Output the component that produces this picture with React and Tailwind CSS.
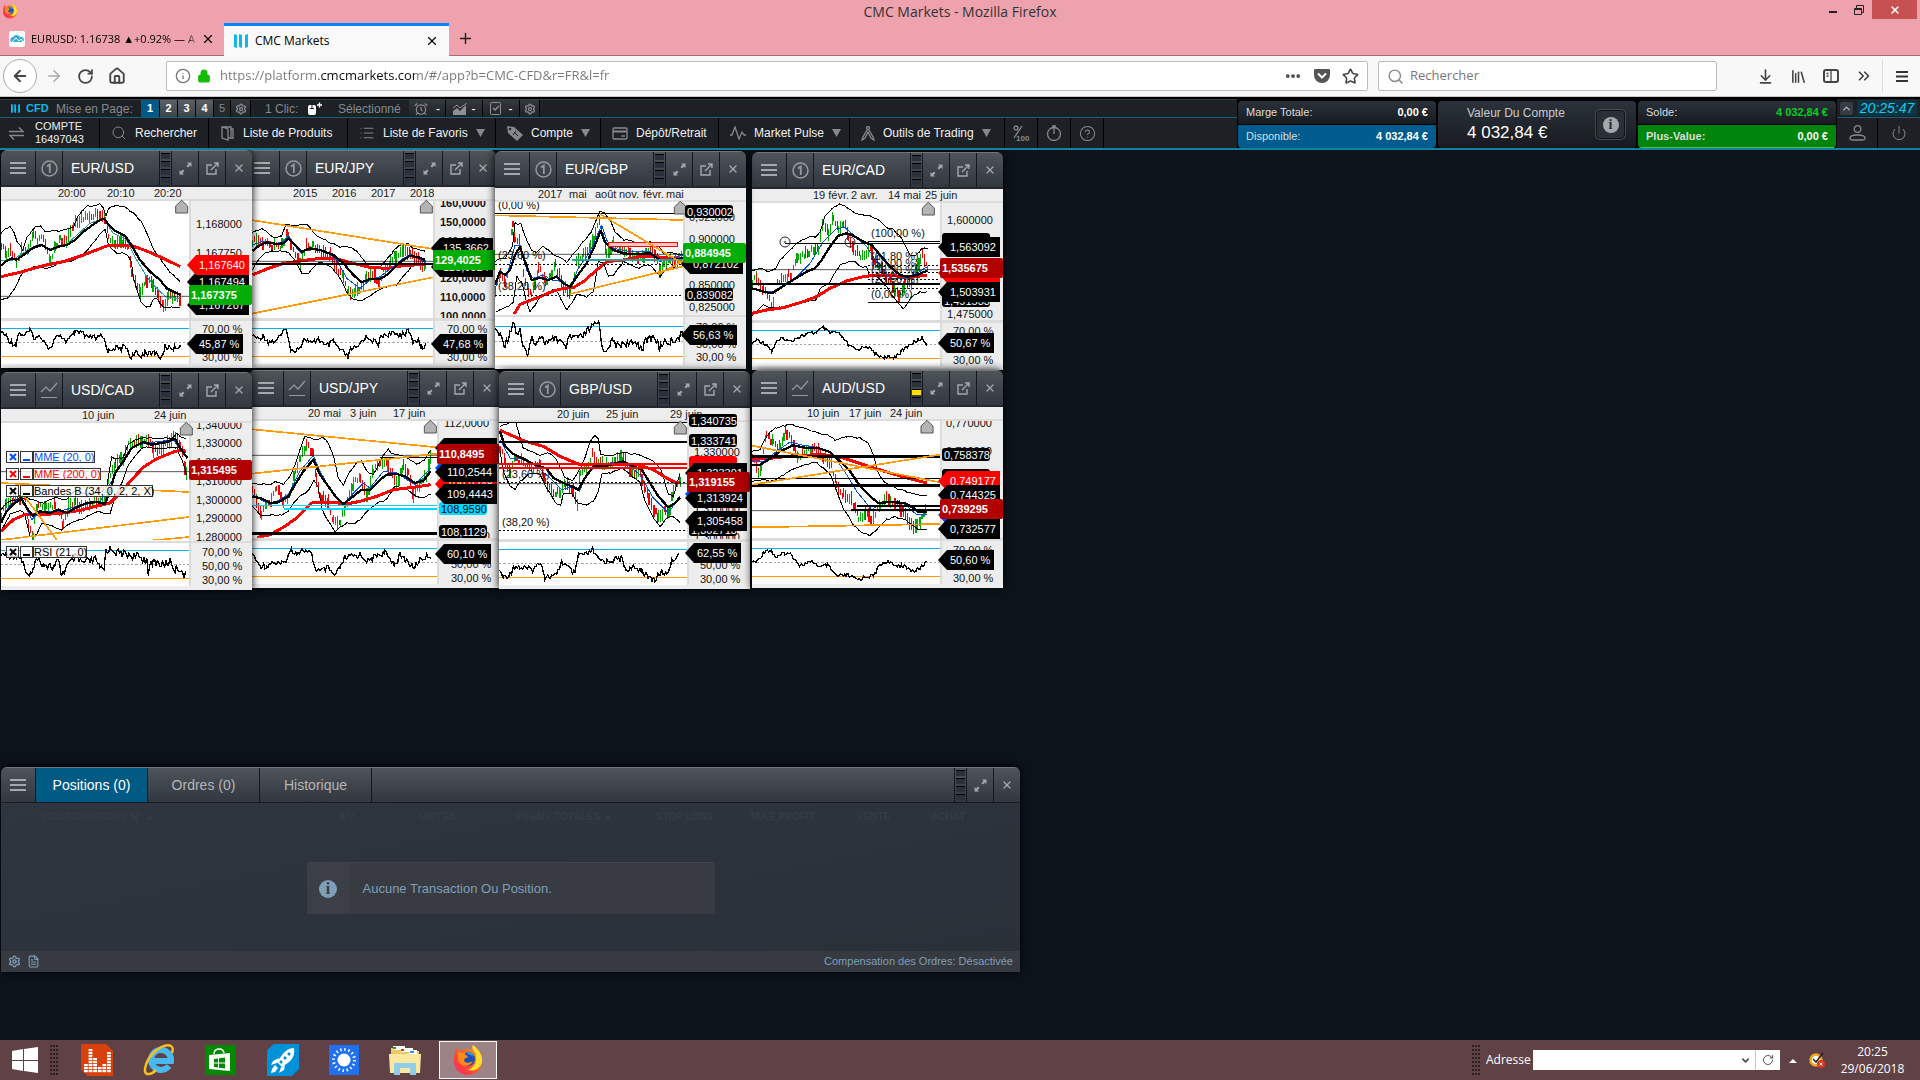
import {
  AlarmClock,
  ArrowDownToLine,
  ArrowLeft,
  ArrowRight,
  ChevronDown,
  ChevronsRight,
  ChevronUp,
  CircleHelp,
  Ellipsis,
  FileText,
  House,
  Info,
  Library,
  List,
  Lock,
  Plus,
  Power,
  RotateCw,
  Search,
  Settings,
  Star,
  X,
} from "lucide-react";

const SANS = "font-['Liberation_Sans',Arial,sans-serif]";
const UI = "font-['Open_Sans','Noto_Sans',sans-serif]";

// Chart coordinates are stored at three units per pixel.
const CHARTS = [
  {
    name: "EUR/USD", mode: "one", place: "left-[1px] top-0 z-20", x0: 3, y0: 126,
    sep: 520, rsi: [550, 592, 634], marker: 545,
    time: [[175, "20:00"], [322, "20:10"], [462, "20:20"]],
    upper: "3,265 15,252 30,246 42,262 52,290 68,313 80,278 105,246 122,242 134,260 170,258 204,252 220,245 232,215 250,193 262,183 290,181 300,178 310,190 318,210 326,190 345,181 375,188 400,205 425,232 445,275 460,315 480,340 500,370 520,392 541,412",
    lower: "3,465 25,458 45,430 60,395 75,378 100,366 120,364 140,372 160,365 190,350 215,350 235,335 255,322 275,300 290,280 305,262 316,255 325,300 340,315 350,325 370,325 385,335 395,355 400,400 415,450 425,475 440,487 450,485 460,465 470,460 480,475 490,488 541,488",
    black: "3,362 15,350 35,340 50,344 70,330 100,308 125,300 150,315 175,305 200,300 225,285 250,260 275,242 300,225 312,221 325,238 345,257 375,272 400,310 420,345 450,380 480,405 500,430 520,440 541,450",
    red: "3,395 60,382 130,362 190,350 250,330 320,303 390,300 440,318 490,340 541,365",
    fast: "3,345 40,345 60,330 100,305 120,297 150,312 200,298 240,262 270,235 310,220 340,265 380,285 410,345 440,395 470,430 500,458 541,460",
    fastColor: "#2a9d9d",
    candles: "3,300 20,330 30,310 50,360 65,315 85,315 100,260 112,290 130,280 150,345 165,300 180,285 200,290 220,240 245,220 262,215 280,210 300,205 315,220 325,280 345,292 370,290 385,310 395,380 420,440 435,405 460,415 475,450 490,490 505,450 525,460 541,462",
    osc: "3,560 20,575 30,590 48,598 55,565 75,570 90,558 105,580 125,575 150,612 165,580 185,575 200,590 225,565 250,562 255,580 275,575 290,582 302,575 312,582 325,618 340,608 360,612 378,603 390,635 402,630 410,625 420,635 435,620 450,628 465,622 485,640 495,605 520,610 541,601",
    lines: [["3,454 567,454", "#000", 2]],
    labels: [
      ["t", 587, 238, "1,168000"], ["t", 587, 325, "1,167750"],
      ["a", 412, "1,167494", "#000"], ["a", 361, "1,167640", "#ff0000"],
      ["a", 481, "1,167287", "#000"], ["p", 450, "1,167375", "#00ad00"],
      ["t", 607, 553, "70,00 %"], ["t", 607, 637, "30,00 %"], ["s", 598, "45,87 %", "#000"],
    ],
  },
  {
    name: "EUR/JPY", mode: "one", place: "left-[245px] top-0 z-10", x0: 735, y0: 126,
    sep: 520, rsi: [550, 592, 634], marker: 1279,
    time: [[879, "2015"], [997, "2016"], [1113, "2017"], [1230, "2018"]],
    upper: "757,262 785,252 805,262 820,278 845,272 858,238 880,242 920,238 940,262 960,278 985,290 1000,295 1020,305 1050,305 1070,320 1100,358 1130,355 1145,362 1160,345 1180,320 1200,300 1225,297 1240,312 1275,318",
    lower: "757,375 775,345 800,320 845,317 865,322 885,345 905,385 925,388 940,365 960,352 990,362 1015,390 1040,440 1060,465 1080,468 1100,458 1130,440 1160,425 1190,422 1205,400 1225,378 1240,360 1275,355",
    black: "757,318 780,300 800,292 830,297 850,295 865,280 880,295 905,320 930,310 960,315 1000,330 1030,355 1060,390 1085,412 1110,402 1140,402 1160,390 1190,360 1210,345 1230,332 1260,338 1275,345",
    red: "757,390 800,372 850,355 900,348 960,340 1010,342 1060,355 1110,367 1160,370 1210,362 1275,358",
    fast: "757,300 790,288 830,295 850,290 866,272 890,310 905,325 930,308 980,320 1010,345 1040,400 1080,430 1110,405 1140,395 1180,365 1210,340 1232,328 1275,352",
    candles: "757,290 775,280 790,295 810,300 840,305 852,290 860,255 875,310 900,350 918,300 940,305 970,325 990,330 1010,370 1030,390 1045,445 1065,435 1090,425 1100,385 1130,400 1138,420 1150,380 1170,350 1190,330 1210,315 1230,320 1255,345 1275,365",
    osc: "757,570 775,582 790,572 805,590 825,588 845,570 860,550 872,620 900,605 915,580 935,598 955,580 975,605 1000,590 1020,615 1044,635 1055,610 1070,612 1090,580 1110,578 1135,600 1145,572 1160,568 1200,568 1228,560 1238,592 1255,585 1265,610 1277,600",
    lines: [
      ["735,222 1299,312", "#ff9900", 5], ["735,510 1299,397", "#ff9900", 5],
      ["735,349 1299,349", "#000", 2], ["735,356 1299,356", "#000", 6],
    ],
    labels: [
      ["b", 1319, 174, "160,0000"], ["b", 1319, 230, "150,0000"], ["b", 1319, 287, "140,0000"],
      ["b", 1319, 398, "120,0000"], ["b", 1319, 455, "110,0000"], ["b", 1319, 512, "100,0000"],
      ["a", 309, "135,3662", "#000"], ["a", 366, "125,9824", "#000"], ["p", 346, "129,4025", "#00ad00"],
      ["t", 1340, 553, "70,00 %"], ["t", 1340, 637, "30,00 %"], ["s", 597, "47,68 %", "#000"],
    ],
  },
  {
    name: "EUR/GBP", mode: "one", place: "left-[495px] top-[1px] z-20", x0: 15, y0: 129,
    sep: 510, rsi: [545, 590, 634], marker: 571,
    time: [[145, "2017"], [238, "mai"], [314, "août"], [388, "nov."], [460, "févr."], [529, "mai"]],
    upper: "15,350 30,340 45,342 58,320 68,300 75,235 92,235 110,285 125,315 140,322 160,305 185,325 210,338 230,350 255,320 280,290 305,260 330,198 345,205 360,225 375,262 400,285 430,290 455,305 480,292 500,295 520,325 545,325 578,330",
    lower: "20,500 40,490 55,485 70,470 80,395 95,410 110,470 120,500 135,480 150,455 190,435 205,445 230,495 245,475 260,445 290,455 310,440 325,350 340,355 355,395 370,390 400,350 440,370 480,360 510,395 530,372 578,365",
    black: "15,420 30,380 45,390 60,375 75,330 90,305 105,350 125,405 150,398 175,405 200,395 220,415 240,425 260,395 290,355 315,300 332,258 345,290 370,315 400,325 430,328 480,325 510,345 540,345 578,340",
    red: "72,508 90,478 120,466 150,455 190,438 220,430 250,428 280,410 320,375 350,350 400,345 450,335 500,335 540,340 575,342",
    fast: "15,435 30,375 50,395 75,300 92,300 110,375 130,400 160,390 185,405 215,405 240,428 265,370 300,320 335,240 350,285 370,310 420,320 480,320 510,350 578,330",
    candles: "15,440 30,380 45,410 60,370 68,230 75,290 88,285 100,380 115,440 125,455 135,420 145,360 165,405 180,400 195,360 220,430 240,440 260,345 280,330 300,300 315,270 328,225 340,270 350,330 370,300 390,310 420,325 450,340 480,310 495,330 510,375 530,345 555,350 575,335",
    osc: "15,550 35,580 45,600 60,560 70,530 80,565 90,560 100,615 115,620 125,580 140,592 150,570 165,592 180,595 195,575 215,595 225,612 240,580 260,575 275,580 290,560 310,545 326,532 342,628 355,600 370,590 385,605 400,590 420,600 440,590 455,610 475,580 495,575 508,612 520,590 540,590 560,580 578,570",
    rough: 26,
    lines: [
      ["15,205 579,205", "#000", 3], ["15,328 579,328", "#000", 2],
      ["15,358 579,358", "#000", 3, "6 6"], ["15,451 579,451", "#000", 3, "6 6"],
      ["354,292 563,292 563,304 354,304 354,292", "#ff0000", 3], ["357,298 561,298", "#ffc4c4", 8],
      ["247,345 579,345", "#2a9d9d", 6], ["15,211 579,225", "#ff9900", 5],
      ["330,207 579,356", "#ff9900", 5], ["240,447 579,364", "#ff9900", 5], ["505,388 579,348", "#ff9900", 5],
    ],
    labels: [
      ["t", 24, 180, "(0,00 %)"], ["t", 24, 331, "(23,60 %)"], ["t", 24, 424, "(38,20 %)"],
      ["t", 598, 215, "0,925000"], ["r", 202, "0,930002", "#000"], ["t", 598, 283, "0,900000"],
      ["a", 357, "0,872102", "#000"], ["p", 324, "0,884945", "#00ad00"],
      ["t", 598, 419, "0,850000"], ["r", 449, "0,839082", "#000"], ["t", 598, 487, "0,825000"],
      ["t", 619, 545, "70,00 %"], ["t", 619, 598, "50,00 %"], ["t", 619, 637, "30,00 %"],
      ["s", 570, "56,63 %", "#000"],
    ],
  },
  {
    name: "EUR/CAD", mode: "one", place: "left-[752px] top-[2px] z-10", x0: 786, y0: 132,
    sep: 526, rsi: [557, 598, 640], marker: 1315,
    time: [[968, "19 févr."], [1082, "2 avr."], [1194, "14 mai"], [1306, "25 juin"]],
    upper: "786,378 810,370 830,378 855,372 870,345 890,325 920,295 950,280 975,275 990,262 1005,215 1025,190 1050,176 1075,190 1100,208 1140,212 1165,225 1185,245 1210,255 1235,280 1250,310 1262,335 1280,330 1295,312 1312,310",
    lower: "786,512 820,480 845,488 880,485 915,480 950,472 980,462 990,432 1020,410 1030,390 1050,360 1075,350 1095,352 1110,365 1130,365 1140,395 1160,395 1185,420 1205,450 1225,475 1240,492 1255,475 1265,455 1290,442 1312,442",
    black: "786,430 805,435 820,440 845,445 870,430 900,410 925,395 950,380 975,370 995,345 1020,305 1045,272 1070,265 1090,272 1120,290 1145,300 1170,330 1200,365 1230,390 1250,395 1280,390 1312,377",
    red: "786,505 830,495 880,488 940,470 980,455 1020,430 1070,408 1120,395 1160,390 1220,393 1260,397 1312,390",
    fast: "786,430 815,438 850,440 880,420 920,395 960,355 1000,290 1040,250 1065,248 1100,278 1130,305 1160,350 1200,400 1240,400 1280,385 1312,365",
    candles: "786,410 800,395 820,435 850,480 862,410 880,400 895,390 905,400 920,340 945,325 965,315 985,310 1000,225 1015,270 1030,215 1045,255 1060,230 1075,270 1090,310 1110,335 1140,310 1155,350 1175,370 1190,400 1215,430 1230,455 1245,410 1265,410 1280,370 1297,330 1312,370",
    osc: "786,595 800,585 815,590 832,600 845,618 860,590 880,580 900,590 920,578 950,568 975,562 1000,548 1020,565 1035,560 1055,575 1075,600 1100,615 1130,602 1160,630 1185,638 1210,638 1240,615 1260,598 1280,588 1297,578 1312,600",
    rough: 11,
    lines: [
      ["786,374 1350,374", "#000", 2], ["786,416 1350,416", "#000", 6],
      ["885,296 1350,296", "#000", 3], ["1134,290 1350,290", "#000", 3], ["1134,472 1350,472", "#000", 3],
      ["1134,361 1350,361", "#000", 3, "6 6"], ["1134,382 1350,382", "#000", 3, "6 6"],
      ["1134,403 1350,403", "#000", 3, "6 6"], ["1134,430 1350,430", "#000", 3, "6 6"],
    ],
    handles: [[885, 291], [1080, 291]],
    labels: [
      ["t", 1144, 263, "(100,00 %)"], ["t", 1144, 333, "(61,80 %)"], ["t", 1144, 355, "(50,00 %)"],
      ["t", 1144, 376, "(38,20 %)"], ["t", 1144, 403, "(23,60 %)"], ["t", 1144, 447, "(0,00 %)"],
      ["t", 1370, 224, "1,600000"], ["r", 284, "", "#000"], ["a", 307, "1,563092", "#000"],
      ["a", 383, "", "#ff0000"], ["r", 469, "1,491533", "#000"], ["a", 442, "1,503931", "#000"],
      ["p", 370, "1,535675", "#b00000"], ["t", 1370, 506, "1,475000"],
      ["t", 1390, 559, "70,00 %"], ["t", 1390, 644, "30,00 %"], ["s", 595, "50,67 %", "#000"],
    ],
  },
  {
    name: "USD/CAD", mode: "line", place: "left-[1px] top-[222px] z-20", x0: 3, y0: 123,
    sep: 518, rsi: [548, 590, 632], marker: 559,
    time: [[245, "10 juin"], [462, "24 juin"]],
    upper: "3,425 20,405 45,395 60,390 75,388 100,395 130,405 165,390 200,395 225,368 260,378 300,375 320,360 335,268 350,272 370,268 385,230 410,215 440,210 480,212 515,212 530,198 540,205 560,215",
    lower: "3,490 30,440 60,425 75,440 90,505 110,500 125,465 140,468 185,488 200,470 240,455 290,430 330,438 345,390 365,345 385,290 410,260 430,238 460,242 510,240 530,240 545,275 560,320",
    black: "3,465 20,430 40,408 65,392 80,420 98,443 120,430 150,435 175,425 200,435 230,418 260,405 290,402 315,408 330,370 345,315 370,280 395,240 430,222 455,230 500,222 525,212 540,240 562,270",
    red: "3,490 40,455 75,440 130,440 190,435 240,427 300,412 330,405 360,375 400,330 430,298 470,272 520,252 545,245 558,250",
    fast: "3,460 30,410 65,390 95,455 120,430 180,430 240,412 300,402 335,340 370,275 400,235 440,225 520,215 560,270",
    candles: "3,440 20,400 40,395 60,395 75,395 85,470 98,500 110,420 140,415 165,410 190,470 205,415 225,400 245,425 270,405 300,395 320,390 330,320 345,280 370,275 385,230 410,220 445,215 460,245 490,240 520,205 540,230 555,300 560,320",
    osc: "3,560 20,560 50,560 70,580 80,625 95,625 105,575 130,585 160,600 175,580 185,620 205,590 225,570 250,585 290,575 300,605 312,605 318,545 340,545 355,555 390,560 420,570 440,575 445,610 460,580 490,590 510,580 525,605 540,600 558,630",
    rough: 26,
    lines: [
      ["3,311 567,311", "#000", 2], ["3,345 567,372", "#ff9900", 5], ["3,516 567,447", "#ff9900", 5],
      ["450,518 567,507", "#ff9900", 5], ["70,380 170,515", "#ff9900", 5],
    ],
    studies: [
      [267, "MME (20, 0)", "#0050ff", 182], [317, "MME (200, 0)", "#ff0000", 200],
      [368, "Bandes B (34, 0, 2, 2, X)", "#000", 358], [551, "RSI (21, 0)", "#000", 160],
    ],
    labels: [
      ["t", 587, 170, "1,340000"], ["t", 587, 226, "1,330000"], ["t", 587, 282, "1,320000"],
      ["t", 587, 338, "1,310000"], ["t", 587, 395, "1,300000"], ["t", 587, 451, "1,290000"],
      ["t", 587, 508, "1,280000"], ["p", 306, "1,315495", "#b00000"],
      ["t", 607, 551, "70,00 %"], ["t", 607, 593, "50,00 %"], ["t", 607, 635, "30,00 %"],
    ],
  },
  {
    name: "USD/JPY", mode: "line", place: "left-[249px] top-[220px] z-10", x0: 747, y0: 117,
    sep: 511, rsi: [542, 584, 626], marker: 1291,
    time: [[924, "20 mai"], [1050, "3 juin"], [1178, "17 juin"]],
    upper: "757,345 780,350 810,348 830,340 850,348 870,325 885,290 900,245 915,205 940,215 970,210 985,225 1000,260 1015,330 1030,350 1050,310 1070,285 1085,280 1100,310 1120,320 1145,270 1165,245 1180,260 1200,262 1225,272 1250,290 1275,275 1292,245",
    lower: "757,415 785,445 810,440 845,440 865,430 880,405 900,385 925,370 942,335 955,360 965,420 980,450 1005,490 1020,478 1040,465 1065,468 1085,450 1100,430 1135,405 1160,395 1185,355 1215,362 1240,380 1262,392 1292,380",
    black: "757,385 785,392 810,405 835,403 865,385 885,350 910,310 940,275 960,320 985,355 1010,390 1030,408 1060,385 1085,365 1110,365 1135,340 1160,320 1190,318 1215,325 1245,345 1270,338 1292,310",
    red: "772,508 810,500 850,478 890,450 935,405 990,402 1040,408 1080,400 1130,385 1180,365 1240,358 1292,350",
    fast: "757,380 800,405 830,400 865,380 900,310 940,262 960,310 1000,380 1030,410 1060,375 1090,345 1110,360 1150,310 1190,315 1245,350 1292,300",
    candles: "757,360 770,400 785,435 800,415 815,400 830,355 850,400 870,385 885,310 900,265 920,230 940,260 950,340 965,390 985,405 1000,460 1020,460 1035,410 1060,350 1080,325 1100,385 1120,310 1140,280 1165,290 1190,345 1210,290 1225,320 1240,380 1262,345 1280,320 1290,270",
    osc: "757,555 775,590 800,595 820,580 830,588 850,588 875,545 890,555 910,545 935,560 945,600 960,610 985,600 1003,625 1020,600 1035,570 1060,565 1080,560 1105,580 1130,562 1155,555 1185,590 1200,562 1220,578 1240,600 1260,575 1280,565 1292,562",
    lines: [
      ["747,262 1311,262", "#000", 2], ["1140,268 1311,268", "#000", 3],
      ["747,412 1311,412", "#00d8ff", 3], ["852,422 1311,422", "#00d8ff", 6], ["747,496 1311,496", "#000", 8],
      ["747,183 1311,238", "#ff9900", 5], ["747,318 1311,257", "#ff9900", 5],
    ],
    labels: [
      ["t", 1331, 164, "112,0000"], ["a", 240, "", "#000"], ["a", 299, "", "#0050ff"],
      ["a", 347, "109,9248", "#ff0000"], ["a", 312, "110,2544", "#000"],
      ["r", 422, "108,9590", "#00d8ff"], ["a", 379, "109,4443", "#000"],
      ["t", 1331, 504, "108,0000"], ["r", 493, "108,1129", "#000"], ["p", 259, "110,8495", "#b00000"],
      ["t", 1352, 587, "50,00 %"], ["t", 1352, 629, "30,00 %"], ["s", 558, "60,10 %", "#000"],
    ],
  },
  {
    name: "GBP/USD", mode: "one", place: "left-[499px] top-[221px] z-20", x0: 27, y0: 120,
    sep: 514, rsi: [545, 587, 628], marker: 571,
    time: [[202, "20 juin"], [348, "25 juin"], [540, "29 juin"]],
    upper: "30,175 50,168 78,162 88,200 100,240 125,250 150,262 175,255 200,275 225,330 250,335 265,310 285,270 300,220 315,203 325,215 332,262 360,262 400,255 450,262 490,280 515,310 535,380 550,385 570,318",
    lower: "30,250 40,310 60,355 75,362 90,340 120,315 150,318 170,360 200,410 212,412 220,375 245,378 265,405 290,410 310,400 325,370 335,320 360,315 395,300 420,320 450,345 465,400 490,450 510,478 530,450 550,445 570,465",
    black: "30,190 45,235 70,258 100,272 135,290 170,302 190,330 220,345 245,355 265,365 285,330 310,295 340,295 370,288 400,280 430,295 455,305 480,345 505,385 535,418 555,405 570,388",
    red: "30,187 60,200 100,218 160,235 210,265 265,288 320,292 370,290 440,290 490,305 530,330 555,342 570,344",
    fast: "30,215 60,270 90,270 140,295 180,330 215,365 250,355 268,370 290,320 320,290 400,280 450,320 490,390 535,435 570,385",
    candles: "30,240 45,280 60,310 75,270 100,285 130,300 150,290 165,340 185,370 210,375 225,345 250,370 262,405 270,310 290,300 308,260 325,280 355,295 375,272 400,270 420,310 450,315 465,360 485,410 505,445 525,430 540,425 550,370 570,335",
    osc: "27,605 40,628 60,620 70,595 100,600 130,605 152,580 165,628 200,622 215,580 235,600 255,620 265,560 290,560 308,545 325,575 350,580 395,570 408,605 430,600 455,605 470,625 495,635 515,610 530,620 545,580 568,555",
    lines: [
      ["27,163 591,163", "#000", 3], ["27,222 591,222", "#000", 6], ["27,289 591,289", "#ff0000", 6],
      ["27,300 591,300", "#ff0000", 6], ["27,344 591,344", "#000", 3, "6 6"], ["27,347 591,347", "#000", 2],
      ["27,488 591,488", "#000", 3, "6 6"],
    ],
    labels: [
      ["t", 36, 317, "(23,60 %)"], ["t", 36, 461, "(38,20 %)"],
      ["r", 160, "1,340735", "#000"], ["r", 218, "1,333741", "#000"], ["t", 611, 251, "1,330000"],
      ["r", 284, "", "#ff0000"], ["a", 315, "1,323301", "#000"], ["a", 377, "", "#0050ff"],
      ["t", 611, 422, "1,310000"], ["a", 389, "1,313924", "#000"], ["t", 611, 506, "1,300000"],
      ["r", 486, "1,302713", "#000"], ["a", 460, "1,305458", "#000"], ["p", 342, "1,319155", "#b00000"],
      ["t", 631, 590, "50,00 %"], ["t", 631, 632, "30,00 %"], ["s", 555, "62,55 %", "#000"],
    ],
  },
  {
    name: "AUD/USD", mode: "line", place: "left-[752px] top-[220px] z-20", x0: 786, y0: 117, led: 2,
    sep: 511, rsi: [542, 584, 626], marker: 1311,
    time: [[952, "10 juin"], [1077, "17 juin"], [1200, "24 juin"]],
    upper: "786,250 810,245 825,215 840,190 860,178 900,168 940,180 980,195 1010,200 1035,215 1070,205 1110,210 1135,228 1150,260 1165,315 1185,345 1215,360 1250,372 1280,380 1310,385",
    lower: "786,340 820,335 850,338 880,320 910,302 950,290 980,283 1000,300 1025,325 1040,370 1060,420 1090,470 1115,495 1140,502 1165,480 1190,455 1215,448 1245,455 1270,475 1285,485 1310,485",
    black: "786,290 810,290 835,275 870,250 910,232 950,240 985,240 1020,252 1050,280 1080,310 1110,355 1140,385 1165,405 1200,402 1245,405 1270,420 1285,432 1310,430",
    red: "786,275 850,270 920,262 1000,260 1060,270 1120,290 1200,315 1260,332 1310,345",
    fast: "786,280 820,280 860,250 900,222 940,232 990,240 1030,260 1070,320 1100,370 1145,425 1180,402 1240,405 1280,440 1310,440",
    candles: "786,265 805,315 815,290 830,200 850,225 870,235 885,190 905,220 925,265 950,250 980,240 1000,270 1025,285 1040,350 1060,380 1085,390 1105,450 1125,435 1150,455 1170,410 1190,390 1215,405 1240,425 1265,475 1290,465 1305,430",
    osc: "786,580 800,582 828,545 845,550 860,570 885,555 905,560 930,592 970,582 990,598 1012,592 1040,625 1070,622 1105,635 1130,625 1150,625 1170,590 1190,580 1210,592 1235,592 1270,610 1290,600 1310,580",
    rough: 12,
    lines: [
      ["786,265 1350,265", "#000", 8], ["786,332 1350,332", "#000", 3], ["786,352 1350,352", "#000", 8],
      ["1101,414 1350,414", "#000", 5], ["1084,425 1350,425", "#000", 5], ["786,428 1350,428", "#000", 2],
      ["786,233 1350,343", "#ff9900", 5], ["786,350 1350,260", "#ff9900", 5], ["786,478 1350,468", "#ff9900", 5],
    ],
    labels: [
      ["t", 1368, 164, "0,770000"], ["t", 1368, 248, "0,760000"], ["r", 262, "0,758378", "#000"],
      ["r", 325, "", "#000"], ["a", 340, "0,749177", "#ff0000"], ["a", 382, "0,744325", "#000"],
      ["a", 440, "", "#0050ff"], ["a", 482, "0,732577", "#000"], ["p", 424, "0,739295", "#b00000"],
      ["t", 1390, 545, "70,00 %"], ["t", 1390, 629, "30,00 %"], ["s", 576, "50,60 %", "#000"],
    ],
  },
];

const parse = (s) => s.split(" ").map((p) => p.split(",").map(Number));

const noise = (n) => {
  const v = Math.sin(n * 12.9898) * 43758.5453;
  return v - Math.floor(v);
};

function sample(str, step) {
  const pts = parse(str);
  const out = [];
  for (let i = 0; i < pts.length - 1; i++) {
    const [xa, ya] = pts[i];
    const [xb, yb] = pts[i + 1];
    for (let x = xa; x < xb; x += step) {
      out.push([x, ya + ((yb - ya) * (x - xa)) / (xb - xa)]);
    }
  }
  out.push(pts[pts.length - 1]);
  return out;
}

function jitter(str, step, amount) {
  return sample(str, step)
    .map(([x, y], i) => `${x},${(y + (noise(i + 3) - 0.5) * amount).toFixed(1)}`)
    .join(" ");
}

function Candles({ path }) {
  const pts = sample(path, 6);
  return pts.map(([x, y], i) => {
    const next = pts[i + 1] ? pts[i + 1][1] : y;
    const up = next - y + (noise(i) - 0.5) * 14 < 0;
    const h = 7 + noise(i + 50) * 14;
    const off = (noise(i + 90) - 0.5) * 16;
    return (
      <line
        key={i}
        x1={x}
        x2={x}
        y1={y + off - h}
        y2={y + off + h}
        stroke={up ? "#00a800" : "#f00000"}
        strokeWidth={noise(i + 20) > 0.7 ? 5 : 3}
      />
    );
  });
}

function AxisLabel({ item, chart, clip }) {
  const { x0, y0, sep } = chart;
  const px = (v) => Math.round((v - x0) / 3);
  const py = (v) => Math.round((v - y0) / 3);
  const kind = item[0];

  if (kind === "t" || kind === "b") {
    return (
      <text
        x={px(item[1])}
        y={py(item[2]) + 4}
        fontSize="11"
        fontWeight={kind === "b" ? 700 : 400}
        fill="#111"
        clipPath={item[2] < sep ? `url(#${clip})` : undefined}
      >
        {item[3]}
      </text>
    );
  }

  const [, cy, text, color] = item;
  const y = py(cy);
  if (kind === "r") {
    return (
      <g>
        <rect x="190" y={y - 7} width="48" height="13" rx="3" fill={color} />
        <text x="192" y={y + 4} fontSize="11" fill={color === "#00d8ff" ? "#000" : "#fff"}>{text}</text>
      </g>
    );
  }
  if (kind === "p") {
    return (
      <g>
        <path d={`M188 ${y - 8}a2 2 0 0 1 2 -2h59a2 2 0 0 1 2 2v16a2 2 0 0 1 -2 2h-59a2 2 0 0 1 -2 -2z`} fill={color} />
        <text x="190" y={y + 4} fontSize="11" fontWeight="700" fill="#fff">{text}</text>
      </g>
    );
  }
  const right = kind === "s" ? 242 : 248;
  return (
    <g>
      <path d={`M186 ${y}L195 ${y - 10}H${right}V${y + 10}H195Z`} fill={color} />
      <text x="198" y={y + 4} fontSize="11" fill="#fff">{text}</text>
    </g>
  );
}

function Chart({ chart }) {
  const { x0, y0, sep, rsi, marker } = chart;
  const edge = x0 + 564;
  const end = x0 + 753;
  const id = `plot-${chart.name.replace("/", "")}`;
  return (
    <svg width="251" height="181" className={`block ${SANS}`} role="img" aria-label={`Graphique ${chart.name}`}>
      <defs>
        <clipPath id={`${id}-axis`}>
          <rect x="0" y="14" width="251" height={Math.round((sep - y0) / 3) - 14} />
        </clipPath>
      </defs>
      <svg width="251" height="181" viewBox={`${x0} ${y0} 753 543`} shapeRendering="crispEdges">
        <defs>
          <clipPath id={id}>
            <rect x={x0} y={y0 + 40} width="564" height={sep - y0 - 42} />
          </clipPath>
        </defs>
        <rect x={x0} y={y0} width="753" height="543" fill="#ededed" />
        <rect x={x0} y={y0 + 36} width="753" height="6" fill="#dcdcdc" />
        <rect x={x0} y={y0 + 42} width="564" height="489" fill="#fff" />
        <rect x={edge} y={y0 + 42} width="5" height="489" fill="#dcdcdc" />
        <rect x={x0} y={sep} width={end - x0} height="7" fill="#dcdcdc" />
        <g clipPath={`url(#${id})`} fill="none" strokeLinejoin="round">
          <Candles path={chart.candles} />
          <polyline points={jitter(chart.upper, 8, 5)} stroke="#000" strokeWidth="3" />
          <polyline points={jitter(chart.lower, 8, 5)} stroke="#000" strokeWidth="3" />
          <polyline points={chart.red} stroke="#ff0000" strokeWidth="9" />
          <polyline points={chart.fast} stroke={chart.fastColor || "#0050e0"} strokeWidth="3" />
          <polyline points={chart.black} stroke="#000" strokeWidth="7" />
          {chart.lines.map(([points, color, width, dash]) => (
            <polyline key={points} points={points} stroke={color} strokeWidth={width} strokeDasharray={dash} />
          ))}
          {(chart.handles || []).map(([cx, cy]) => (
            <g key={cx} stroke="#222" strokeWidth="3" shapeRendering="auto">
              <circle cx={cx} cy={cy} r="15" />
              <path d={`M${cx - 4} ${cy}h8M${cx} ${cy - 4}v8`} strokeWidth="2" />
            </g>
          ))}
        </g>
        <path d={`M${x0} ${rsi[0]}H${edge}`} stroke="#00b4f0" strokeWidth="3" />
        <path d={`M${x0} ${rsi[1]}H${edge}`} stroke="#777" strokeWidth="2" strokeDasharray="7 6" />
        <path d={`M${x0} ${rsi[2]}H${edge}`} stroke="#ff9900" strokeWidth="3" />
        <polyline points={jitter(chart.osc, 4, chart.rough || 18)} fill="none" stroke="#000" strokeWidth="4" />
        <path
          d={`M${marker} ${y0 + 40}l18 17v21h-36v-21z`}
          fill="#b4b4b4"
          stroke="#555"
          strokeWidth="3"
          shapeRendering="auto"
        />
      </svg>
      {chart.time.map(([x, text]) => (
        <text key={x} x={Math.round((x - x0) / 3)} y="10" fontSize="11" fill="#222">{text}</text>
      ))}
      {chart.labels.map((item, i) => (
        <AxisLabel key={i} item={item} chart={chart} clip={`${id}-axis`} />
      ))}
      {(chart.studies || []).map(([cy, text, color, w]) => {
        const y = Math.round((cy - y0) / 3);
        return (
          <g key={text} fill="#fff" fillOpacity="0.8" stroke="#333">
            <rect x="5.5" y={y - 5.5} width="12" height="11" />
            <rect x="19.5" y={y - 5.5} width="12" height="11" />
            <rect x="32.5" y={y - 5.5} width={Math.round(w / 3)} height="11" />
            <path d={`M9 ${y - 3}l6 6m0 -6l-6 6M22 ${y + 3}h7`} stroke={color} strokeWidth="2" />
            <text x="33" y={y + 4} fontSize="11" fill={color} fillOpacity="1" stroke="none">{text}</text>
          </g>
        );
      })}
    </svg>
  );
}

function Leds({ lit }) {
  return (
    <div className="flex w-3 shrink-0 flex-col gap-[2px] border-l border-[#14171c] px-px pt-[2px]">
      {[0, 1, 2, 3].map((i) => (
        <span
          key={i}
          className={`h-[6px] border-t border-black ${lit === i ? "bg-[#ffe000]" : "bg-[#2b313c]"}`}
        />
      ))}
    </div>
  );
}

const HEAD_CELL = "flex w-[27px] shrink-0 items-center justify-center border-l border-[#14171c] text-[#a5a8ac]";
const HEAD = "flex border-t border-[#70757a] bg-linear-to-b from-[#4e5459] to-[#323740]";

function MenuIcon() {
  return (
    <svg width="16" height="12" viewBox="0 0 16 12" fill="#a5a8ac">
      <path d="M0 0h16v2H0zM0 5h16v2H0zM0 10h16v2H0z" />
    </svg>
  );
}

function ExpandIcon() {
  return (
    <svg width="13" height="13" viewBox="0 0 13 13" fill="currentColor">
      <path d="M8 .5h4.500V5L11 3.500 9 5.500 7.500 4l2-2zM5 12.500H.5V8L2 9.500l2-2L5.500 9l-2 2z" />
    </svg>
  );
}

function ChartWindow({ chart }) {
  return (
    <section className={`absolute w-[251px] overflow-hidden rounded-t-md shadow-[0_0_8px_#000] ${chart.place}`}>
      <header className={`${HEAD} h-[37px] border-b-2 border-b-[#23272e]`}>
        <button aria-label="Menu" className="flex w-[34px] shrink-0 items-center justify-center">
          <MenuIcon />
        </button>
        <button aria-label="Mode" className={HEAD_CELL}>
          {chart.mode === "one" ? (
            <svg width="17" height="17" viewBox="0 0 17 17" fill="none" stroke="#96999d">
              <circle cx="8.500" cy="8.500" r="7.500" strokeWidth="1.500" />
              <path d="M6 6.500L8.800 4.500V13" strokeWidth="1.800" />
            </svg>
          ) : (
            <svg width="18" height="17" viewBox="0 0 18 17" fill="none" stroke="#96999d">
              <path d="M1 10l5-5 4 4 7-8M1 15.500h16" strokeWidth="1.200" />
            </svg>
          )}
        </button>
        <h2 className="flex flex-1 items-center border-l border-[#14171c] pl-2 text-sm text-white">{chart.name}</h2>
        <Leds lit={chart.led} />
        <button aria-label="Agrandir" className={HEAD_CELL}><ExpandIcon /></button>
        <button aria-label="Détacher" className={HEAD_CELL}>
          <svg width="13" height="13" viewBox="0 0 13 13" fill="none" stroke="currentColor" strokeWidth="1.400">
            <path d="M6 3H1v9h9V7M5 8l7-7M8 1h4v4" />
          </svg>
        </button>
        <button aria-label="Fermer" className={HEAD_CELL}><X size={12} strokeWidth={2.4} /></button>
      </header>
      <Chart chart={chart} />
    </section>
  );
}

function FirefoxLogo({ size }) {
  return (
    <svg width={size} height={size} viewBox="0 0 32 32">
      <defs>
        <linearGradient id="ffx" x1="0" y1="1" x2="1" y2="0">
          <stop offset="0" stopColor="#ff1f6b" />
          <stop offset="0.5" stopColor="#ff5a20" />
          <stop offset="1" stopColor="#ffb020" />
        </linearGradient>
      </defs>
      <path d="M3 9c0-2 1-4 2-5l3 4c3-3 8-4 11-2l2-5c8 6 10 11 9 18-1 7-7 12-14 12C8 31 2 25 2 17c0-3 0-5 1-8z" fill="url(#ffx)" />
      <path d="M21 1c-2 5 3 6 3 12 1 6-3 11-8 13 8 2 14-3 14-10 0-6-4-11-9-15z" fill="#ffe030" />
      <circle cx="16" cy="15" r="7" fill="#1c50b8" />
      <path d="M14 9c3-2 7 0 8 3l-4-1z" fill="#28a0e8" />
      <path d="M6 8l4 1 4-1c-2 2-1 3 2 4-1 3-4 2-4 4 1 4 6 3 9 1-3 7-14 6-15-2z" fill="#ff8a1c" />
    </svg>
  );
}

function CmcBars({ className }) {
  return (
    <svg className={className} viewBox="0 0 14 14" fill="#10b8e8">
      <path d="M0 0l3 1v13l-3-1zM5 0l3 1v13l-3-1zM11 1l3-1v13l-3 1z" />
    </svg>
  );
}

function BrowserChrome() {
  return (
    <div className={UI}>
      <div className="relative flex h-14 items-end border-b border-[#a56c78] bg-[#eea2ad] text-xs">
        <div className="absolute left-[2px] top-[3px]"><FirefoxLogo size={16} /></div>
        <div className="absolute inset-x-0 top-0 text-center text-sm leading-6 text-[#333]">CMC Markets - Mozilla Firefox</div>
        <div className="absolute right-[3px] top-0 flex h-[19px] items-center text-[#111]">
          <button aria-label="Réduire" className="flex h-full w-[26px] items-center justify-center pt-1">
            <span className="h-[2px] w-2 bg-[#222]" />
          </button>
          <button aria-label="Restaurer" className="flex h-full w-[26px] items-center justify-center">
            <svg width="10" height="10" viewBox="0 0 10 10" fill="none" stroke="#222">
              <path d="M.5 3.500h7v6h-7zM2.500 3V.5h7v7H8M.5 4.500h7" />
            </svg>
          </button>
          <button aria-label="Fermer" className="flex h-full w-[45px] items-center justify-center bg-[#c75050] text-white">
            <X size={12} strokeWidth={3} />
          </button>
        </div>
        <div className="flex h-8 w-[224px] items-center px-[9px] text-black">
          <svg width="16" height="16" viewBox="0 0 16 16">
            <rect width="16" height="16" rx="2" fill="#fff" />
            <path d="M2 11a3 3 0 0 1 2-5 4 4 0 0 1 7 0 3 3 0 0 1 3 5z" fill="#35b0dc" />
            <path d="M3 11l4-4 3 3 2-2 2 3" stroke="#fff" fill="none" />
          </svg>
          <span className="ml-[6px] flex-1 whitespace-nowrap text-[11px] mask-r-from-90%">EURUSD: 1.16738 ▲+0.92% — A</span>
          <button aria-label="Fermer l'onglet"><X size={14} /></button>
        </div>
        <div className="-mb-px flex h-[33px] w-[225px] items-center border-t-[3px] border-[#0a84ff] bg-[#f9f9fa] px-[10px] pb-px text-black">
          <CmcBars className="h-4 w-[14px]" />
          <span className="ml-[7px] flex-1">CMC Markets</span>
          <button aria-label="Fermer l'onglet"><X size={14} /></button>
        </div>
        <button aria-label="Nouvel onglet" className="mb-2 ml-2"><Plus size={17} strokeWidth={2} color="#222" /></button>
      </div>

      <div className="flex h-[41px] items-center border-b border-[#c8c8c8] bg-[#f8f8f9] pl-[3px] text-[#444]">
        <button aria-label="Précédent" className="flex size-[34px] items-center justify-center rounded-full border border-[#aaa] bg-white">
          <ArrowLeft size={18} strokeWidth={2.5} />
        </button>
        <button aria-label="Suivant" className="ml-2 text-[#aaa]"><ArrowRight size={18} /></button>
        <button aria-label="Actualiser" className="ml-[14px]"><RotateCw size={17} strokeWidth={2.5} /></button>
        <button aria-label="Accueil" className="ml-[14px]"><House size={18} strokeWidth={2.5} /></button>
        <div className="ml-[40px] flex h-[30px] min-w-0 flex-1 items-center rounded-xs border border-[#bbb] bg-white px-2">
          <Info size={16} color="#777" />
          <Lock size={14} className="ml-[6px] fill-[#12bc00] text-[#12bc00]" />
          <input
            aria-label="Adresse"
            readOnly
            value="https://platform.cmcmarkets.com/#/app?b=CMC-CFD&r=FR&l=fr"
            className="ml-[9px] min-w-0 flex-1 bg-[linear-gradient(90deg,#777_99px,#0c0c0d_99px,#0c0c0d_195px,#777_195px)] bg-clip-text text-[13px] text-transparent outline-none"
          />
          <Ellipsis size={18} strokeWidth={3} />
          <svg width="16" height="16" viewBox="0 0 16 16" className="ml-3">
            <path d="M1 1h14a1 1 0 0 1 1 1v5a8 8 0 0 1-16 0V2a1 1 0 0 1 1-1z" fill="#555" />
            <path d="M4.500 6L8 9.500 11.500 6" fill="none" stroke="#fff" strokeWidth="2" strokeLinecap="round" />
          </svg>
          <Star size={17} strokeWidth={2.300} className="ml-3" />
        </div>
        <label className="ml-[10px] flex h-[30px] w-[339px] items-center rounded-xs border border-[#bbb] bg-white px-2">
          <Search size={17} color="#888" />
          <input aria-label="Rechercher sur le Web" placeholder="Rechercher" className="ml-[6px] flex-1 text-[13px] outline-none placeholder:text-[#777]" />
        </label>
        <div className="flex items-center gap-4 pl-[40px]">
          <ArrowDownToLine size={17} strokeWidth={2.300} />
          <Library size={17} strokeWidth={2.200} />
          <svg width="16" height="14" viewBox="0 0 16 14" fill="none" stroke="#444" strokeWidth="2">
            <rect x="1" y="1" width="14" height="12" rx="2" />
            <path d="M8 1v12M3.500 4.500h2M3.500 7h2" strokeWidth="1.300" />
          </svg>
          <ChevronsRight size={18} strokeWidth={2.300} />
        </div>
        <button aria-label="Ouvrir le menu" className="ml-[9px] flex h-[34px] w-[38px] items-center justify-center border-l border-[#ddd]">
          <svg width="12" height="11" viewBox="0 0 12 11" fill="#333"><path d="M0 0h12v2H0zM0 4.500h12v2H0zM0 9h12v2H0z" /></svg>
        </button>
      </div>
    </div>
  );
}

const MINI = "flex h-full items-center justify-center border-r border-black bg-linear-to-b from-[#34383c] to-[#1f2226] text-[#8d9094]";

function LayoutBar() {
  return (
    <div className="flex h-[18px] items-center border-t border-[#3a3e42] text-xs text-[#85898d]">
      <CmcBars className="ml-[11px] h-[9px] w-[9px]" />
      <span className="ml-[6px] w-[20px] text-[11px] font-bold text-[#10b8e8]">CFD</span>
      <span className="ml-[10px] w-[85px]">Mise en Page:</span>
      <button className="h-full w-[18px] bg-[#005a87] text-[11px] font-bold text-white">1</button>
      {["2", "3", "4"].map((n) => (
        <button key={n} className="h-full w-[18px] border-l border-black bg-linear-to-b from-[#5a5f66] to-[#3f444a] text-[11px] font-bold text-white">{n}</button>
      ))}
      <button className="h-full w-[18px] border-x border-black bg-[#25292d] text-[11px]">5</button>
      <button aria-label="Réglages" className={`${MINI} w-[20px]`}><Settings size={12} strokeWidth={2.5} /></button>
      <span className="ml-[14px] w-[42px]">1 Clic:</span>
      <svg width="16" height="14" viewBox="0 0 16 14">
        <rect x="1" y="3" width="8" height="10" rx="2" fill="#fff" />
        <path d="M5 3v4M3 6.500h4" stroke="#1d2125" />
        <path d="M10 3h5M12.500.5v5" stroke="#fff" strokeWidth="1.300" />
      </svg>
      <span className="ml-[15px] w-[71px]">Sélectionné</span>
      <button aria-label="Alarmes" className={`${MINI} w-[37px] gap-2`}><AlarmClock size={14} /><span className="text-white">-</span></button>
      <button aria-label="Graphiques" className={`${MINI} w-[37px] gap-1`}>
        <svg width="15" height="12" viewBox="0 0 15 12"><path d="M0 12V8l4-3 3 3 6-6v10z" fill="#8d9094" /><path d="M0 5l4-3 3 3 7-5" stroke="#8d9094" fill="none" /></svg>
        <span className="text-white">-</span>
      </button>
      <button aria-label="Ordres" className={`${MINI} w-[37px] gap-2`}>
        <svg width="11" height="13" viewBox="0 0 11 13" fill="none" stroke="#8d9094"><rect x=".5" y=".5" width="10" height="12" rx="1" /><path d="M3 6l2 2 4-4" strokeWidth="1.500" /></svg>
        <span className="text-white">-</span>
      </button>
      <button aria-label="Réglages" className={`${MINI} w-[20px]`}><Settings size={12} strokeWidth={2.5} /></button>
    </div>
  );
}

function TagIcon() {
  return (
    <svg width="16" height="15" viewBox="0 0 16 15" fill="#85898d">
      <path d="M0 0l7 1 9 8-6 6-9-8z" />
      <circle cx="3" cy="3" r="1.200" fill="#1d2125" />
      <path d="M7 6l4 4M9 5l-3 4" stroke="#1d2125" fill="none" />
    </svg>
  );
}

const OUTLINE = { fill: "none", stroke: "#85898d", strokeWidth: 1.3 };

const MENU = [
  { label: "Rechercher", w: "w-[109px]", icon: <Search size={16} strokeWidth={1.5} color="#85898d" /> },
  {
    label: "Liste de Produits", w: "w-[139px]",
    icon: <svg width="15" height="15" viewBox="0 0 15 15" {...OUTLINE}><path d="M2 1h9v10M2 1v11l6 2V3zM11 3h2v9h-5" /></svg>,
  },
  { label: "Liste de Favoris", w: "w-[148px]", arrow: true, icon: <List size={16} strokeWidth={1.6} color="#85898d" /> },
  { label: "Compte", w: "w-[105px]", arrow: true, icon: <TagIcon /> },
  {
    label: "Dépôt/Retrait", w: "w-[118px]",
    icon: <svg width="16" height="13" viewBox="0 0 16 13" {...OUTLINE}><rect x="1" y="1" width="14" height="11" rx="1" /><path d="M1 4.500h14" strokeWidth="2" /><path d="M9 9h4" /></svg>,
  },
  {
    label: "Market Pulse", w: "w-[131px]", arrow: true,
    icon: <svg width="16" height="14" viewBox="0 0 16 14" {...OUTLINE}><path d="M0 9h2l3-8 4 12 3-7 2 3h2" /></svg>,
  },
  {
    label: "Outils de Trading", w: "w-[155px]", arrow: true,
    icon: <svg width="14" height="15" viewBox="0 0 14 15" {...OUTLINE}><circle cx="7" cy="2" r="1.500" /><path d="M6 4L2 11l-1 3 3-2 3-6 3 6 3 2-1-3-4-7" /></svg>,
  },
];

function MainMenu() {
  return (
    <nav className="flex h-[31px] items-stretch border-t border-[#1c5f74] text-xs text-[#f0f0f0]">
      <button className="flex w-[100px] items-center border-r border-black pl-[9px] text-left text-[11px] leading-[13px]">
        <svg width="15" height="13" viewBox="0 0 15 13" {...OUTLINE}><path d="M0 4.500h14l-4-4M15 8.500H1l4 4" /></svg>
        <span className="ml-[11px]">COMPTE<br />16497043</span>
      </button>
      {MENU.map((m) => (
        <button key={m.label} className={`flex shrink-0 items-center whitespace-nowrap border-r border-black pl-[11px] ${m.w}`}>
          {m.icon}
          <span className="ml-[8px]">{m.label}</span>
          {m.arrow && (
            <svg width="9" height="8" viewBox="0 0 9 8" className="ml-2" fill="#85898d"><path d="M0 0h9L4.500 8z" /></svg>
          )}
        </button>
      ))}
      <button aria-label="Pourcentage" className="flex w-[33px] items-center justify-center border-r border-black text-[#85898d]">
        <svg width="17" height="17" viewBox="0 0 17 17" {...OUTLINE}>
          <circle cx="3" cy="3" r="2" />
          <path d="M9 1L1 13" />
          <text x="3" y="16" fontSize="8" fontWeight="700" fill="#85898d" stroke="none">100</text>
        </svg>
      </button>
      <button aria-label="Minuteur" className="flex w-[33px] items-center justify-center border-r border-black">
        <svg width="16" height="16" viewBox="0 0 16 16" {...OUTLINE}><circle cx="8" cy="9" r="6.500" /><path d="M8 9V1M6 1h4" /></svg>
      </button>
      <button aria-label="Aide" className="flex w-[33px] items-center justify-center border-r border-black">
        <CircleHelp size={17} strokeWidth={1.5} color="#85898d" />
      </button>
    </nav>
  );
}

const PANEL = "bg-linear-to-b from-[#2b323b] to-[#171b20]";

function Balance({ rows }) {
  return (
    <div className="flex w-[198px] flex-col gap-px overflow-hidden rounded-sm text-[11px] text-[#dcdcdc]">
      {rows.map((r) => (
        <div key={r.label} className={`flex h-[23px] items-center justify-between px-2 ${r.tone}`}>
          <span>{r.label}</span>
          <span className={`font-bold ${r.value}`}>{r.amount}</span>
        </div>
      ))}
    </div>
  );
}

function AppHeader() {
  return (
    <div className={`flex h-[53px] border-b-2 border-[#1580a0] border-t-2 border-t-black bg-[#1d2125] ${SANS}`}>
      <div className="flex-1">
        <LayoutBar />
        <MainMenu />
      </div>
      <div className="flex gap-[2px] bg-black pl-px pr-px pt-[2px]">
        <Balance
          rows={[
            { label: "Marge Totale:", amount: "0,00 €", tone: PANEL, value: "text-white" },
            { label: "Disponible:", amount: "4 032,84 €", tone: "bg-[#005c8e]", value: "text-white" },
          ]}
        />
        <div className={`flex w-[198px] items-center rounded-sm pl-[29px] ${PANEL}`}>
          <div className="w-[129px]">
            <div className="text-xs leading-4 text-[#c8cace]">Valeur Du Compte</div>
            <div className="text-[17px] leading-6 text-white">4 032,84 €</div>
          </div>
          <button aria-label="Informations" className="flex size-[29px] items-center justify-center rounded-sm border border-[#111] bg-[#2b3038] shadow-[0_0_0_1px_#444b55]">
            <span className="flex size-4 items-center justify-center rounded-full bg-[#a5a8ac] font-['Liberation_Serif',serif] text-sm font-bold text-[#2b3038]">i</span>
          </button>
        </div>
        <Balance
          rows={[
            { label: "Solde:", amount: "4 032,84 €", tone: PANEL, value: "text-[#00d020]" },
            { label: "Plus-Value:", amount: "0,00 €", tone: "bg-[#00850c] font-bold border-b border-[#4cc054]", value: "text-white" },
          ]}
        />
      </div>
      <div className="w-[83px]">
        <div className="flex h-[18px] items-center gap-1 pl-[3px]">
          <button aria-label="Réduire" className="flex h-[13px] w-[13px] items-center justify-center rounded-xs bg-[#383d44] text-[#b0b3b7]">
            <ChevronUp size={11} strokeWidth={3} />
          </button>
          <time className="w-[60px] bg-[#0c3440] text-center text-sm italic leading-4 text-[#20c8f0]">20:25:47</time>
        </div>
        <div className="flex h-[31px] border-t border-[#1c5f74] text-[#85898d]">
          <button aria-label="Profil" className="flex w-[41px] items-center justify-center border-r border-black">
            <svg width="17" height="16" viewBox="0 0 17 16" {...OUTLINE}><circle cx="8.500" cy="4" r="3.300" /><path d="M1 13c0-4 15-4 15 0 0 2-1 2-3 2H4c-2 0-3 0-3-2z" /></svg>
          </button>
          <button aria-label="Déconnexion" className="flex flex-1 items-center justify-center"><Power size={16} strokeWidth={1.500} /></button>
        </div>
      </div>
    </div>
  );
}

const COLUMNS = [
  ["POSITION/ORDRE N° ▲", "w-[297px]"],
  ["A/V", "w-[81px]"],
  ["UNITES", "w-[97px]"],
  ["PV&MV TOTALES ▲", "w-[140px]"],
  ["STOP LOSS", "w-[93px]"],
  ["TAKE PROFIT", "w-[108px]"],
  ["VENTE", "w-[74px]"],
  ["ACHAT", ""],
];

function PositionsWindow() {
  return (
    <section className="absolute left-[1px] top-[617px] flex h-[205px] w-[1019px] flex-col overflow-hidden rounded-t-md bg-linear-to-br from-[#303640] via-[#2d333c] to-[#2a3038] shadow-[0_0_8px_#000]">
      <header className={`${HEAD} h-9 shrink-0 border-b border-b-[#171a20] text-sm text-[#b4b6b9]`}>
        <button aria-label="Menu" className="flex w-[34px] items-center justify-center"><MenuIcon /></button>
        <button className="w-[112px] border-l border-[#14171c] bg-[#005a84] text-white">Positions (0)</button>
        <button className="w-[112px] border-l border-[#14171c]">Ordres (0)</button>
        <button className="w-[113px] border-x border-[#14171c]">Historique</button>
        <div className="flex-1" />
        <Leds />
        <button aria-label="Agrandir" className={HEAD_CELL}><ExpandIcon /></button>
        <button aria-label="Fermer" className={HEAD_CELL}><X size={12} strokeWidth={2.4} /></button>
      </header>
      <table className="ml-[40px] mt-[6px] table-fixed text-left text-[10px] leading-4 text-[#353b45]">
        <thead>
          <tr>
            {COLUMNS.map(([c, w]) => (
              <th key={c} className={`whitespace-nowrap ${w}`}>{c}</th>
            ))}
          </tr>
        </thead>
      </table>
      <div className="flex flex-1 justify-center pt-[37px]">
        <div className="flex h-[52px] w-[408px] items-stretch rounded-xs border-t border-[#40444a] bg-[#383b41] text-[13px] text-[#7d9fba]">
          <div className="flex w-[43px] items-center justify-center bg-[#3c3f46]">
            <span className="flex size-[18px] items-center justify-center rounded-full bg-[#7d9fba] font-['Liberation_Serif',serif] text-base font-bold text-[#383b41]">i</span>
          </div>
          <p className="flex items-center pl-[13px]">Aucune Transaction Ou Position.</p>
        </div>
      </div>
      <footer className="flex h-[21px] shrink-0 items-center gap-[6px] bg-[#373a40] px-[7px] text-[11px] text-[#7d9fba]">
        <button aria-label="Réglages"><Settings size={13} strokeWidth={2.5} /></button>
        <button aria-label="Rapport"><FileText size={13} /></button>
        <a href="#" className="ml-auto">Compensation des Ordres: Désactivée</a>
      </footer>
    </section>
  );
}

function Grip() {
  return (
    <svg width="8" height="30" viewBox="0 0 8 30">
      {[0, 4, 8, 12, 16, 20, 24, 28].map((y) => (
        <path key={y} d={`M0 ${y}h2v2H0zM3 ${y}h2v2H3zM6 ${y}h2v2H6z`} fill="#2c2022" />
      ))}
    </svg>
  );
}

function Equalizer() {
  const cols = [3, 8, 5, 2, 3, 7];
  return (
    <svg width="32" height="32" viewBox="0 0 32 32">
      <path d="M0 0h25l7 7v25H7l-7-6z" fill="#d8400c" />
      {cols.map((n, i) =>
        Array.from({ length: n }, (_, k) => (
          <rect key={`${i}-${k}`} x={3 + i * 4.6} y={26 - k * 3} width="3.800" height="2.200" fill="#fff" />
        ))
      )}
    </svg>
  );
}

function Taskbar() {
  return (
    <footer className={`flex h-10 shrink-0 items-center bg-[#604146] text-xs text-white ${UI}`}>
      <button aria-label="Démarrer" className="ml-3">
        <svg width="26" height="26" viewBox="0 0 26 26" fill="#fff">
          <path d="M0 4l11-2v11H0zM12 2l14-2v13H12zM0 14h11v10L0 22zM12 14h14v12l-14-2z" />
        </svg>
      </button>
      <div className="ml-3"><Grip /></div>
      <div className="ml-[23px] flex items-center gap-[30px]">
        <button aria-label="Musique"><Equalizer /></button>
        <button aria-label="Internet Explorer">
          <svg width="32" height="32" viewBox="0 0 32 32" fill="none">
            <path d="M26 22a10 10 0 1 1 2-5H9" stroke="#49b8ee" strokeWidth="6" />
            <path d="M28 2C22-1 9 7 4 18c-3 7-3 13 2 12 3 0 5-2 7-4M28 2c2 1 2 4 1 7" stroke="#f5c020" strokeWidth="2.500" />
          </svg>
        </button>
        <button aria-label="Store" className="w-8">
          <svg width="30" height="30" viewBox="0 0 30 30">
            <path d="M0 0h30v30H0z" fill="#008a00" />
            <path d="M4 10l21-2v18L4 24z" fill="#fff" />
            <path d="M9 9c0-6 9-7 10-1" stroke="#fff" strokeWidth="1.500" fill="none" />
            <path d="M9 14l4-.5v4H9zM14 13.300l6-.7v4.900h-6zM9 18.500h4v4L9 22zM14 18.500h6v5l-6-.8z" fill="#008a00" />
          </svg>
        </button>
        <button aria-label="Lanceur">
          <svg width="32" height="32" viewBox="0 0 32 32">
            <path d="M7 0h25v25l-7 7H0V6z" fill="#0092d8" />
            <path d="M27 4c-5 0-9 3-12 7l-5 7 5 5 7-5c4-3 6-8 5-14zM12 14l-6 3-2 4 6-2zM18 21l-1 5-5 3 2-6zM8 21l3 3-3 4-4 1 1-4z" fill="#fff" />
            <path d="M21 9l2 2M17 13l2 2M13 17l2 2" stroke="#0092d8" strokeWidth="2.500" />
          </svg>
        </button>
        <button aria-label="Météo">
          <svg width="30" height="30" viewBox="0 0 30 30">
            <path d="M0 0h30v30H0z" fill="#2070f0" />
            <circle cx="15" cy="15" r="6.500" fill="#fff" />
            <circle cx="15" cy="15" r="10.500" fill="none" stroke="#fff" strokeWidth="3" strokeDasharray="1.400 2.720" />
          </svg>
        </button>
        <button aria-label="Explorateur">
          <svg width="32" height="30" viewBox="0 0 32 30">
            <path d="M2 3h10l2 3h16v22H2z" fill="#e8c868" />
            <path d="M4 1h12v4H4zM12 3h12v4H12zM20 5h8v4h-8z" fill="#fff" />
            <path d="M4 2h3v2H4z" fill="#0a0" /><path d="M12 4h3v2h-3z" fill="#c33" /><path d="M21 6h4v2h-4z" fill="#29f" />
            <path d="M0 9h32l-1 19H1z" fill="#fae7a0" />
            <path d="M5 30V18h22v12h-6v-7H11v7z" fill="#90cdea" />
          </svg>
        </button>
      </div>
      <button aria-label="Firefox" className="ml-[18px] flex h-[38px] w-[58px] items-center justify-center border border-white bg-[#9c8386]">
        <FirefoxLogo size={32} />
      </button>

      <div className="ml-auto"><Grip /></div>
      <label htmlFor="address" className="ml-[6px] w-[47px]">Adresse</label>
      <div className="flex h-5 w-[247px] bg-white text-[#555]">
        <input id="address" className="min-w-0 flex-1 px-1 text-black outline-none" />
        <button aria-label="Dérouler" className="px-1"><ChevronDown size={11} strokeWidth={4} /></button>
        <button aria-label="Actualiser" className="flex w-[25px] items-center justify-center border-l border-[#ccc]"><RotateCw size={12} /></button>
      </div>
      <svg width="8" height="5" viewBox="0 0 8 5" className="ml-[9px]" fill="#fff"><path d="M0 5l4-4 4 4z" /></svg>
      <svg width="16" height="16" viewBox="0 0 16 16" className="ml-3">
        <circle cx="7" cy="8" r="5.500" fill="#fff" stroke="#f0a818" strokeWidth="2.500" />
        <path d="M4 7l3 3 7-9" stroke="#222" strokeWidth="1.500" fill="none" />
        <circle cx="12" cy="12" r="4" fill="#e03018" />
        <path d="M10.500 10.500l3 3m0-3l-3 3" stroke="#fff" />
      </svg>
      <time className="w-[95px] text-center text-xs leading-[17px]">20:25<br />29/06/2018</time>
    </footer>
  );
}

export default function App() {
  return (
    <div className="flex min-h-screen flex-col bg-[#0c141b]">
      <BrowserChrome />
      <AppHeader />
      <main className={`relative min-h-[840px] flex-1 overflow-hidden ${SANS}`}>
        {CHARTS.map((chart) => (
          <ChartWindow key={chart.name} chart={chart} />
        ))}
        <PositionsWindow />
      </main>
      <Taskbar />
    </div>
  );
}
